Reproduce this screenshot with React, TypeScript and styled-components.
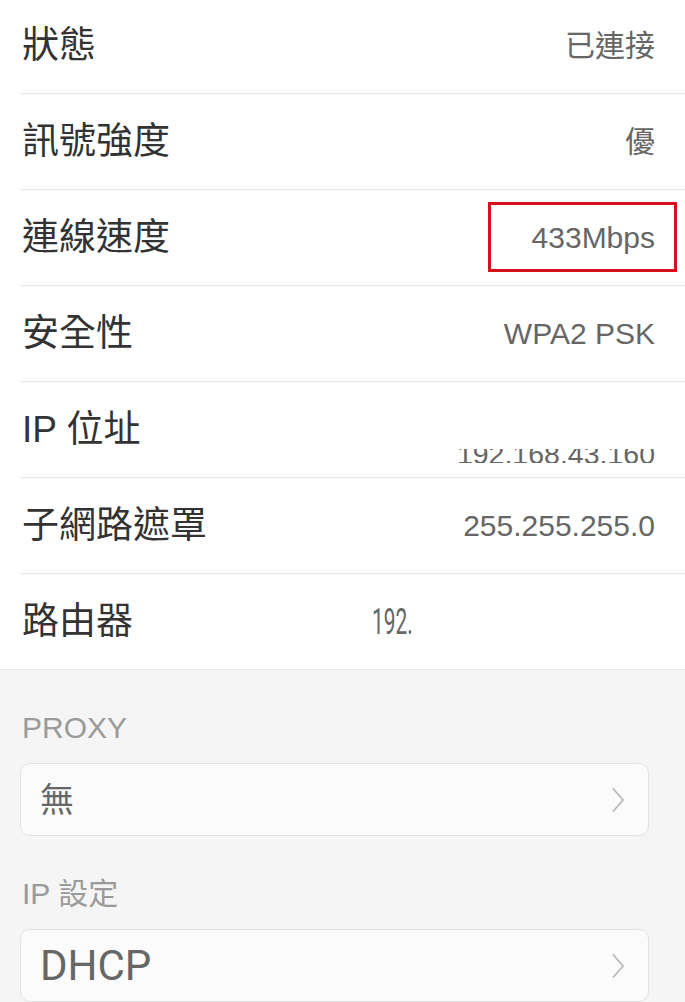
import styled, { createGlobalStyle } from "styled-components";

const GlobalStyle = createGlobalStyle`
  html, body {
    margin: 0;
    padding: 0;
    background: #f5f5f5;
    font-family: "Liberation Sans", "Noto Sans CJK TC", sans-serif;
  }
  * { box-sizing: border-box; }
`;

type Item = { label: string; value: string; highlight?: boolean };

const items: Item[] = [
  { label: "狀態", value: "已連接" },
  { label: "訊號強度", value: "優" },
  { label: "連線速度", value: "433Mbps", highlight: true },
  { label: "安全性", value: "WPA2 PSK" },
];

function Chevron() {
  return (
    <svg width="14" height="26" viewBox="0 0 14 26">
      <path d="M2 1.5 L12 13 L2 24.5" fill="none" stroke="#b4b4b4" strokeWidth="1.6" />
    </svg>
  );
}

function App() {
  return (
    <>
      <GlobalStyle />
      <Page>
        <List>
          {items.map((it) => (
            <Row key={it.label}>
              <Label>{it.label}</Label>
              <Value>{it.value}</Value>
              {it.highlight && <Mark />}
            </Row>
          ))}
          <Row>
            <Label>IP 位址</Label>
            <ClipValue>
              <ClipInner>192.168.43.160</ClipInner>
            </ClipValue>
          </Row>
          <Row>
            <Label>子網路遮罩</Label>
            <Value>255.255.255.0</Value>
          </Row>
          <Row>
            <Label>路由器</Label>
            <RouterValue>192.</RouterValue>
          </Row>
        </List>
        <Settings>
          <SectionTitle>PROXY</SectionTitle>
          <SelectBox>
            <SelectText $size={34}>無</SelectText>
            <Chevron />
          </SelectBox>
          <SectionTitle>IP 設定</SectionTitle>
          <SelectBox>
            <SelectText $size={42}>DHCP</SelectText>
            <Chevron />
          </SelectBox>
        </Settings>
      </Page>
    </>
  );
}

export default App;

const Page = styled.div`
  width: 685px;
  height: 1002px;
  overflow: hidden;
  background: #f5f5f5;
`;

const List = styled.div`
  margin-top: -2px;
  padding-left: 20px;
  background: #fff;
  border-bottom: 1px solid #e8e8e8;
`;

const Row = styled.div`
  position: relative;
  display: flex;
  align-items: center;
  justify-content: space-between;
  height: 96px;
  padding: 0 30px 0 2px;
  border-bottom: 1px solid #e6e6e6;

  &:last-child {
    height: 95px;
    border-bottom: none;
  }
`;

const Label = styled.span`
  font-size: 37px;
  color: #333;
  line-height: 1;
`;

const Value = styled.span`
  font-size: 30px;
  color: #666;
  line-height: 1;
`;

const ClipValue = styled.div`
  align-self: center;
  margin-top: 52px;
  height: 14px;
  overflow: hidden;
`;

const ClipInner = styled.div`
  margin-top: -10px;
  font-size: 28.5px;
  line-height: 30px;
  color: #666;
`;

const RouterValue = styled.span`
  display: inline-block;
  margin-right: 226px;
  font-family: Roboto, sans-serif;
  font-size: 29px;
  line-height: 1;
  color: #666;
  transform: scale(0.72, 1.28);
  transform-origin: left center;
`;

const Mark = styled.div`
  position: absolute;
  top: 12px;
  right: 8px;
  width: 189px;
  height: 70px;
  border: 3px solid #d8101c;
`;

const Settings = styled.div`
  padding: 0 36px 0 20px;
`;

const SectionTitle = styled.div`
  margin: 38px 0 15px 2px;
  font-size: 30px;
  line-height: 40px;
  color: #9a9a9a;
`;

const SelectBox = styled.div`
  display: flex;
  align-items: center;
  justify-content: space-between;
  height: 73px;
  padding: 0 23px 0 19px;
  background: #fbfbfb;
  border: 1px solid #e2e2e2;
  border-radius: 10px;
`;

const SelectText = styled.span<{ $size: number }>`
  font-family: Roboto, "Noto Sans CJK TC", sans-serif;
  font-size: ${(p) => p.$size}px;
  line-height: 1;
  color: #666;
`;
